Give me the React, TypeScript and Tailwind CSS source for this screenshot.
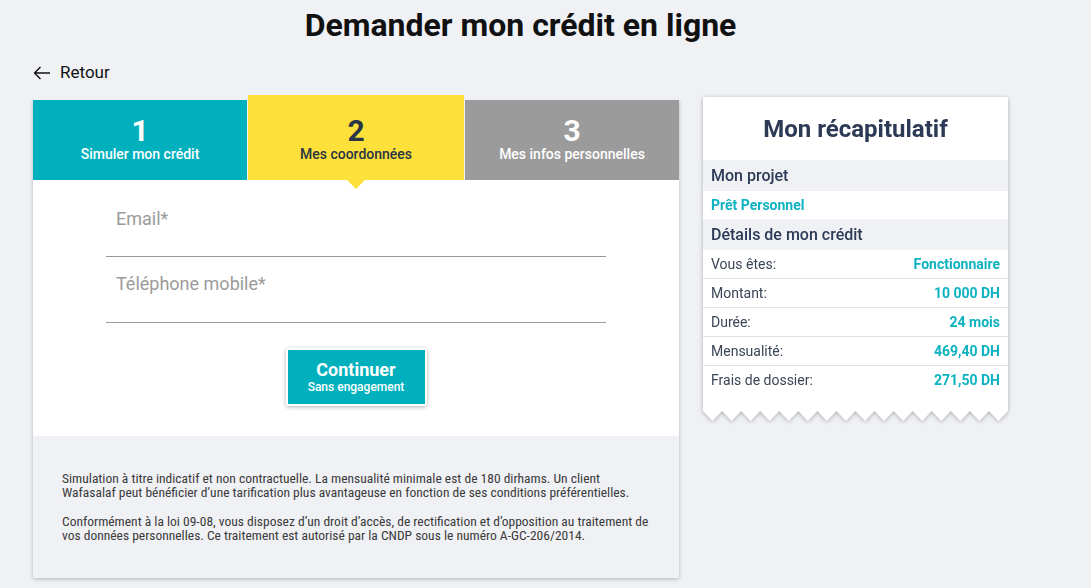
import React from "react";

const teeth = 16;
function Zigzag() {
  const w = 305;
  const tw = w / teeth;
  let d = `M0 0 L${w} 0 `;
  const pts: string[] = [];
  for (let i = teeth; i >= 0; i--) {
    const x = i * tw;
    pts.push(`L${x.toFixed(2)} 1`);
    if (i > 0) pts.push(`L${(x - tw / 2).toFixed(2)} 11`);
  }
  d += pts.join(" ") + " Z";
  return (
    <svg width={w} height={12} viewBox={`0 0 ${w} 12`} className="block">
      <path d={d} fill="#ffffff" />
    </svg>
  );
}

function Row({ label, value, last }: { label: string; value: string; last?: boolean }) {
  return (
    <div className={`flex items-center justify-between h-[29px] px-2 ${last ? "" : "border-b border-[#e2e3e6]"}`}>
      <span className="text-[14px] text-[#3a4556]">{label}</span>
      <span className="text-[14px] font-bold text-[#0cb2c0]">{value}</span>
    </div>
  );
}

export default function App() {
  return (
    <div className="min-h-[588px] bg-[#f0f1f5] pb-2" style={{ fontFamily: "Roboto, 'Liberation Sans', sans-serif" }}>
      <div className="ml-[33px] w-[975px]">
        <h1 className="pt-[6px] text-center text-[32px] font-bold leading-[38px] text-[#111111]">Demander mon crédit en ligne</h1>
        <div className="mt-[17px] flex items-center gap-[9px] h-[24px] text-[#111]">
          <svg width="18" height="14" viewBox="0 0 18 14" fill="none" stroke="#111" strokeWidth="1.4">
            <path d="M17 7 H1.5 M7.5 1 L1.5 7 L7.5 13" />
          </svg>
          <span className="text-[17px]">Retour</span>
        </div>
        <div className="mt-[12px] flex items-start gap-[24px]">
          {/* left column */}
          <div className="w-[646px] shadow-[0_1px_4px_rgba(0,0,0,0.25)] mt-[3px]">
            <div className="flex items-end h-[85px] bg-[#f0f1f5] -mt-[5px] relative">
              <div className="w-[214px] h-[80px] bg-[#00b0bd] flex flex-col items-center pt-[15px] text-white">
                <div className="text-[30px] font-bold leading-[32px]">1</div>
                <div className="text-[14px] font-medium leading-[16px] -mt-[1px]">Simuler mon crédit</div>
              </div>
              <div className="ml-[1px] w-[216px] h-[85px] bg-[#fde03a] flex flex-col items-center pt-[20px] text-[#2a3546] relative">
                <div className="text-[30px] font-bold leading-[32px]">2</div>
                <div className="text-[14px] font-medium leading-[16px] -mt-[1px]">Mes coordonnées</div>
                <div className="absolute left-1/2 -translate-x-1/2 top-full w-0 h-0 border-l-[9px] border-r-[9px] border-t-[9px] border-l-transparent border-r-transparent border-t-[#fde03a] z-10"></div>
              </div>
              <div className="ml-[1px] flex-1 h-[80px] bg-[#9b9b9b] flex flex-col items-center pt-[15px] text-white">
                <div className="text-[30px] font-bold leading-[32px]">3</div>
                <div className="text-[14px] font-medium leading-[16px] -mt-[1px]">Mes infos personnelles</div>
              </div>
            </div>
            <div className="bg-white h-[256px] pt-[27px]">
              <div className="ml-[73px] w-[500px]">
                <div className="h-[50px] border-b border-[#9a9a9a] pl-[10px] text-[18px] text-[#9b9b9b] leading-[24px]">Email*</div>
                <div className="mt-[15px] h-[51px] border-b border-[#9a9a9a] pl-[10px] text-[18px] text-[#9b9b9b] leading-[24px]">Téléphone mobile*</div>
              </div>
              <div className="mt-[25px] flex justify-center">
                <div className="p-[2px] bg-white rounded-[3px] shadow-[0_1px_4px_rgba(0,0,0,0.3)]">
                  <div className="w-[137px] h-[54px] bg-[#00b0bd] flex flex-col items-center justify-center text-white">
                    <div className="text-[18px] font-bold leading-[20px]">Continuer</div>
                    <div className="text-[12px] font-medium leading-[14px]">Sans engagement</div>
                  </div>
                </div>
              </div>
            </div>
            <div className="bg-[#f0f1f5] h-[142px] pt-[35px] pl-[29px] pr-[6px] text-[13.5px] leading-[14px] text-[#3a3a3a]" style={{ fontFamily: "'Roboto Condensed', 'Liberation Sans Narrow', Roboto, sans-serif" }}>
              <p>Simulation à titre indicatif et non contractuelle. La mensualité minimale est de 180 dirhams. Un client<br />Wafasalaf peut bénéficier d’une tarification plus avantageuse en fonction de ses conditions préférentielles.</p>
              <p className="mt-[15px]">Conformément à la loi 09-08, vous disposez d’un droit d’accès, de rectification et d’opposition au traitement de<br />vos données personnelles. Ce traitement est autorisé par la CNDP sous le numéro A-GC-206/2014.</p>
            </div>
          </div>
          {/* right column */}
          <div className="w-[305px] drop-shadow-[0_1px_2px_rgba(0,0,0,0.28)]">
            <div className="bg-white">
              <div className="h-[63px] flex items-center justify-center text-[24px] font-bold text-[#2c3a55]">Mon récapitulatif</div>
              <div className="h-[31px] bg-[#f0f1f5] flex items-center px-2 text-[16px] font-medium text-[#2c3a55]">Mon projet</div>
              <div className="h-[28px] flex items-center px-2 text-[14px] font-bold text-[#0cb2c0]">Prêt Personnel</div>
              <div className="h-[31px] bg-[#f0f1f5] flex items-center px-2 text-[16px] font-medium text-[#2c3a55]">Détails de mon crédit</div>
              <Row label="Vous êtes:" value="Fonctionnaire" />
              <Row label="Montant:" value="10 000 DH" />
              <Row label="Durée:" value="24 mois" />
              <Row label="Mensualité:" value="469,40 DH" />
              <Row label="Frais de dossier:" value="271,50 DH" last />
              <div className="h-[15px]"></div>
            </div>
            <Zigzag />
          </div>
        </div>
      </div>
    </div>
  );
}
